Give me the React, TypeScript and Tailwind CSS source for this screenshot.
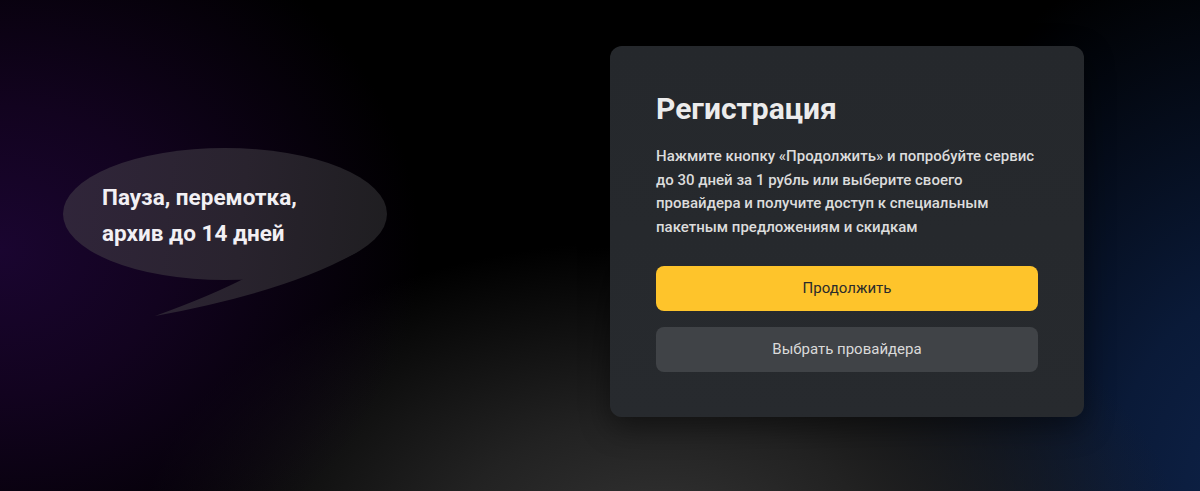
import React from 'react'

// Speech bubble drawn as an ellipse plus a curved tail, sharing one gradient
function Bubble({ lines }: { lines: string[] }) {
  return (
    <div className="relative w-[340px] h-[180px] shrink-0">
      <svg className="absolute inset-0" width="340" height="180" viewBox="0 0 340 180">
        <defs>
          <linearGradient id="bubbleFill" gradientUnits="userSpaceOnUse" x1="8" y1="60" x2="332" y2="90">
            <stop offset="0" stopColor="#30253a" />
            <stop offset="0.55" stopColor="#29232e" />
            <stop offset="1" stopColor="#1f1e21" />
          </linearGradient>
        </defs>
        <ellipse cx="170" cy="69" rx="162" ry="66" fill="url(#bubbleFill)" />
        <path d="M150 126 L192 132 Q158 150 100 171 Q235 146 302 107 Z" fill="url(#bubbleFill)" />
      </svg>
      <div className="absolute left-[47px] top-[34px] text-[22.5px] font-bold leading-[36px] text-[#f2f0f4]">
        {lines.map(line => (
          <div key={line}>{line}</div>
        ))}
      </div>
    </div>
  )
}

export default function App() {
  return (
    <div
      className="relative w-full h-[491px] overflow-hidden font-['Roboto',sans-serif] bg-black bg-[radial-gradient(ellipse_420px_360px_at_0px_250px,#1a0530_0%,#12031f_40%,rgba(0,0,0,0)_100%),radial-gradient(ellipse_520px_300px_at_660px_540px,#333333_0%,#222222_40%,rgba(0,0,0,0)_100%),radial-gradient(ellipse_420px_560px_at_1260px_491px,#0e2248_0%,#0a1a38_35%,#050c1a_70%,rgba(0,0,0,0)_100%)]"
    >
      <div className="flex items-start pl-[55px] pt-[46px] gap-[215px]">
        <div className="pt-[99px]">
          <Bubble lines={['Пауза, перемотка,', 'архив до 14 дней']} />
        </div>

        {/* Registration card */}
        <div className="w-[474px] shrink-0 rounded-xl bg-[linear-gradient(180deg,#25282c_0%,#272a2e_100%)] px-[46px] pt-[44px] pb-[45px] shadow-[0_10px_30px_rgba(0,0,0,0.45)]">
          <h2 className="text-[30px] font-bold leading-[38px] text-[#ececec] mb-[17px]">Регистрация</h2>
          <p className="text-[15px] font-medium leading-[23.5px] text-[#dcdcdc]">
            Нажмите кнопку «Продолжить» и попробуйте сервис до 30 дней за 1 рубль или выберите своего
            провайдера и получите доступ к специальным пакетным предложениям и скидкам
          </p>
          <div className="mt-[27px] flex flex-col gap-4">
            <button className="h-[45px] w-full rounded-lg bg-[#fec42b] text-[15px] text-[#2b2b2b]">
              Продолжить
            </button>
            <button className="h-[45px] w-full rounded-lg bg-[#404347] text-[15px] text-[#dadada]">
              Выбрать провайдера
            </button>
          </div>
        </div>
      </div>
    </div>
  )
}
